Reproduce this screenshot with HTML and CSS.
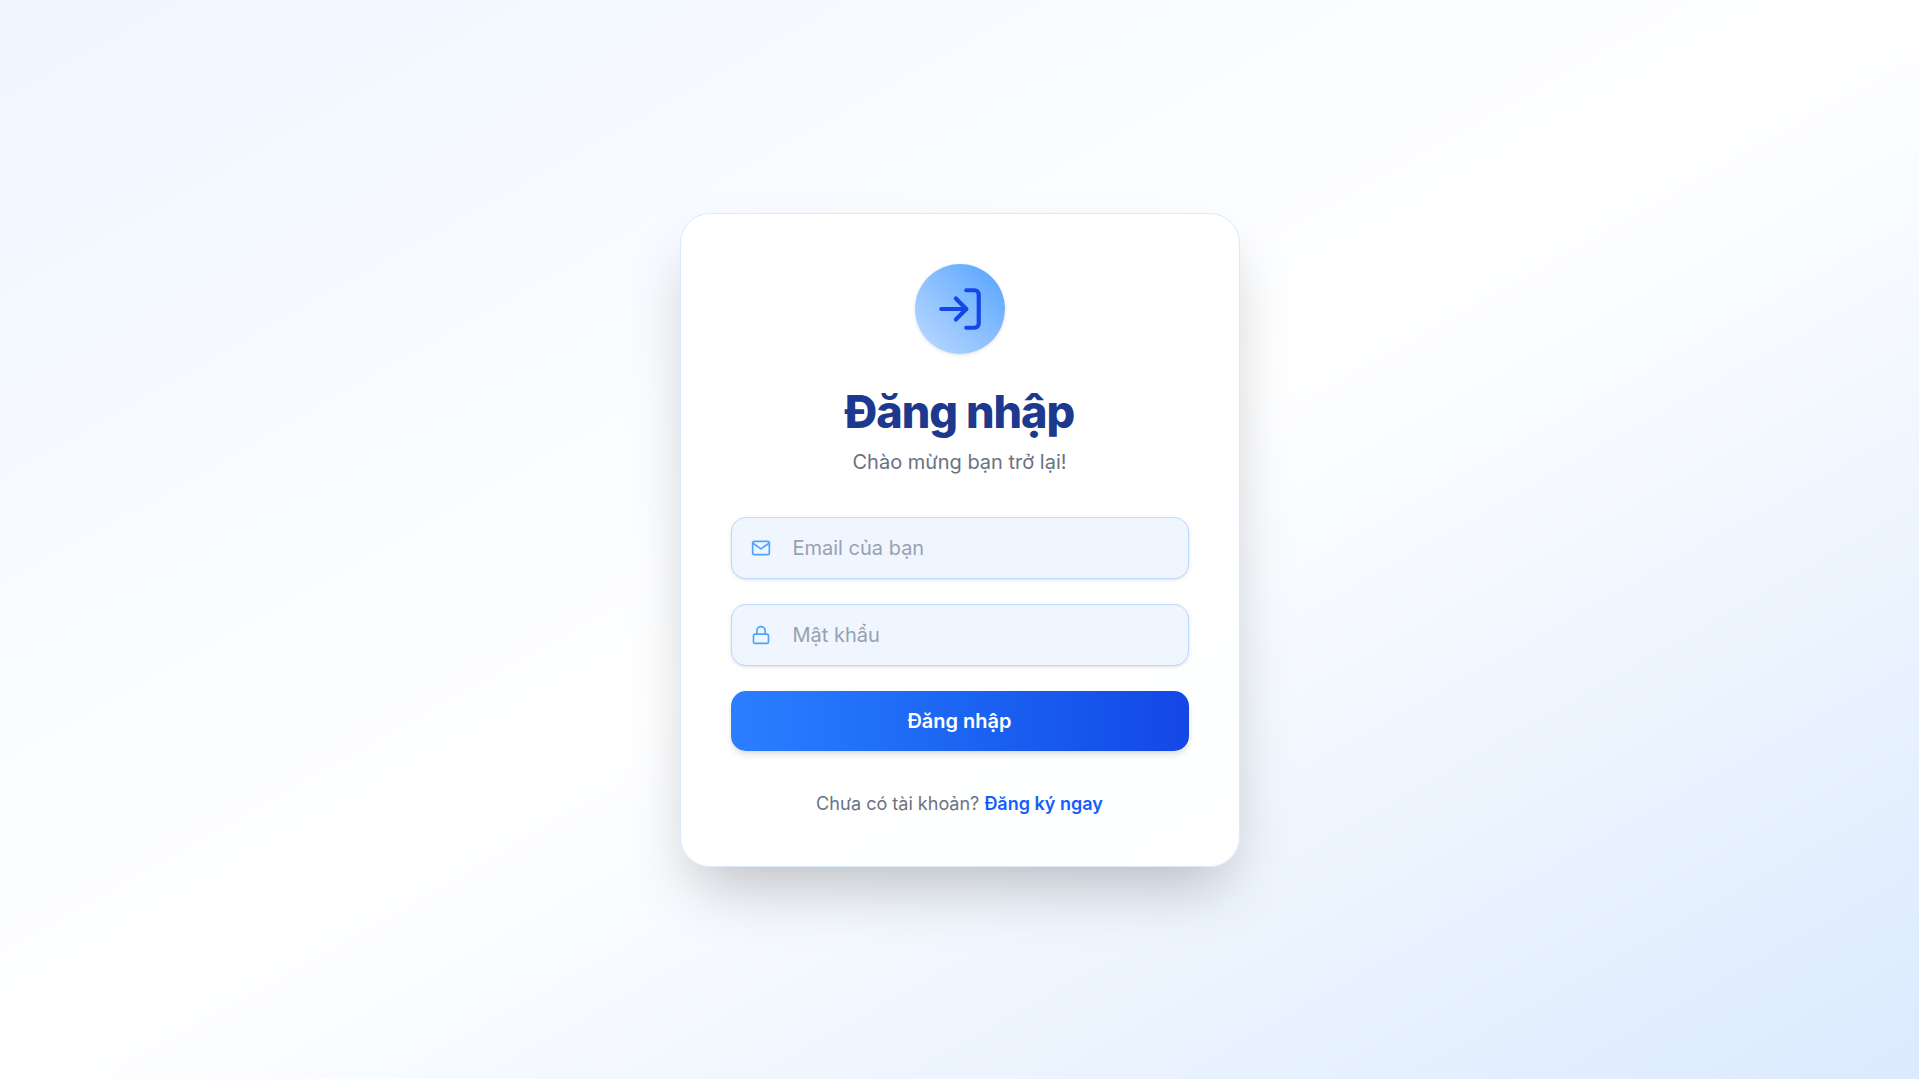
FILE: index.html
```html
<!DOCTYPE html>
<html lang="vi">
<head>
  <meta charset="utf-8">
  <meta name="viewport" content="width=device-width, initial-scale=1">
  <title>Đăng nhập</title>
  <link rel="stylesheet" href="styles.css">
</head>
<body>
  <main class="page">
    <section class="card">
      <header class="intro">
        <span class="badge">
          <svg class="badge-icon" viewBox="0 0 24 24" aria-hidden="true">
            <path d="M15 3h4a2 2 0 0 1 2 2v14a2 2 0 0 1-2 2h-4"/>
            <path d="M10 17l5-5-5-5"/>
            <path d="M15 12H3"/>
          </svg>
        </span>
        <h1 class="title">Đăng nhập</h1>
        <p class="subtitle">Chào mừng bạn trở lại!</p>
      </header>
      <form class="form">
        <label class="field">
          <svg class="field-icon" viewBox="0 0 24 24" aria-hidden="true">
            <rect x="2" y="4" width="20" height="16" rx="2"/>
            <path d="M22 6l-10 7L2 6"/>
          </svg>
          <input class="input" type="email" name="email" placeholder="Email của bạn" aria-label="Email của bạn">
        </label>
        <label class="field">
          <svg class="field-icon" viewBox="0 0 24 24" aria-hidden="true">
            <rect x="3" y="11" width="18" height="11" rx="2"/>
            <path d="M7 11V7a5 5 0 0 1 10 0v4"/>
          </svg>
          <input class="input" type="password" name="password" placeholder="Mật khẩu" aria-label="Mật khẩu">
        </label>
        <button class="submit" type="submit">Đăng nhập</button>
      </form>
      <p class="signup">Chưa có tài khoản? <a class="signup-link" href="#">Đăng ký ngay</a></p>
    </section>
  </main>
</body>
</html>
```
FILE: styles.css
```css
*,
*::before,
*::after {
  box-sizing: border-box;
}

body {
  margin: 0;
  font-family: Inter, "Liberation Sans", sans-serif;
  font-size: 20px;
  line-height: 30px;
  color: #6a7282;
}

.page {
  display: flex;
  align-items: center;
  justify-content: center;
  min-height: 100vh;
  background: linear-gradient(to bottom right in oklab, #eff6ff, #ffffff, #dbeafe);
}

.card {
  width: 100%;
  max-width: 560px;
  padding: 50px;
  border: 1px solid #dbeafe;
  border-radius: 30px;
  background: rgba(255, 255, 255, 0.9);
  box-shadow: 0 31px 62px -15px rgba(0, 0, 0, 0.25);
}

.intro {
  display: flex;
  flex-direction: column;
  align-items: center;
  margin-bottom: 40px;
}

.badge {
  display: flex;
  padding: 20px;
  margin-bottom: 33px;
  border-radius: 50%;
  background: linear-gradient(to top right in oklab, #bedbff, #51a2ff);
  box-shadow: 0 1px 4px rgba(0, 0, 0, 0.1), 0 1px 2px -1px rgba(0, 0, 0, 0.1);
}

.badge-icon {
  width: 50px;
  height: 50px;
  fill: none;
  stroke: #1447e6;
  stroke-width: 2;
  stroke-linecap: round;
  stroke-linejoin: round;
}

.title {
  margin: 0 0 10px;
  font-size: 45px;
  line-height: 50px;
  font-weight: 800;
  letter-spacing: -1px;
  color: #1c398e;
}

.subtitle {
  margin: 0;
}

.form {
  display: flex;
  flex-direction: column;
  gap: 25px;
}

.field {
  display: flex;
  align-items: center;
  gap: 22px;
  height: 62px;
  padding: 0 19px;
  border: 1px solid #bedbff;
  border-radius: 15px;
  background: #eff6ff;
  box-shadow: 0 1px 4px rgba(0, 0, 0, 0.1), 0 1px 2px -1px rgba(0, 0, 0, 0.1);
}

.field:focus-within {
  border-color: #51a2ff;
}

.field-icon {
  flex: none;
  width: 20px;
  height: 20px;
  fill: none;
  stroke: #51a2ff;
  stroke-width: 2;
  stroke-linecap: round;
  stroke-linejoin: round;
}

.input {
  flex: 1;
  min-width: 0;
  padding: 0;
  border: 0;
  outline: 0;
  background: transparent;
  font: inherit;
  color: #1e2939;
}

.input::placeholder {
  color: #99a1af;
  opacity: 1;
}

.submit {
  height: 60px;
  padding: 0 20px;
  border: 0;
  border-radius: 15px;
  background: linear-gradient(to right in oklab, #2b7fff, #1447e6);
  box-shadow: 0 5px 8px -1px rgba(0, 0, 0, 0.1), 0 2px 5px -2px rgba(0, 0, 0, 0.1);
  font: inherit;
  font-weight: 600;
  color: #ffffff;
  cursor: pointer;
}

.signup {
  margin: 40px 0 0;
  font-size: 18px;
  line-height: 25px;
  text-align: center;
}

.signup-link {
  font-weight: 600;
  color: #155dfc;
  text-decoration: none;
}

.signup-link:hover {
  text-decoration: underline;
}
```
